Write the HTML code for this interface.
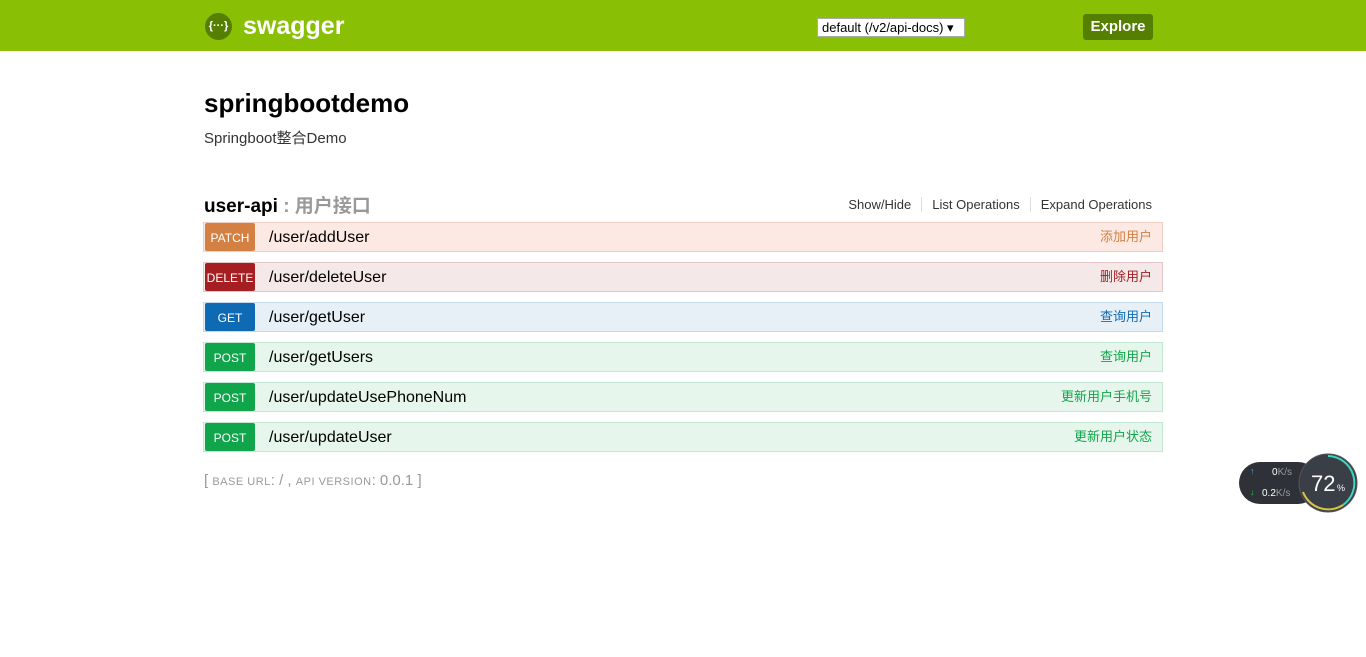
<!DOCTYPE html>
<html><head><meta charset="utf-8"><style>
body{margin:0;background:#fff;font-family:"Liberation Sans","Noto Sans CJK SC",sans-serif;width:1366px;height:657px;overflow:hidden;position:relative}
.hdr{position:absolute;left:0;top:0;width:1366px;height:51px;background:#89bf04}
.logo{position:absolute;left:205px;top:13px;width:27px;height:27px;border-radius:50%;background:#547f00;color:#fff;font-size:11px;line-height:27px;text-align:center;font-weight:bold}
.brand{position:absolute;left:243px;top:12px;color:#fff;font-size:25px;font-weight:bold}
.sel{position:absolute;left:817px;top:18px;width:148px;height:19px;background:#fff;border:1px solid #aaa;font-size:13px;line-height:18px;padding-left:4px;box-sizing:border-box;color:#000}
.exp{position:absolute;left:1083px;top:14px;width:70px;height:26px;background:#547f00;border-radius:3px;color:#fff;font-weight:bold;font-size:15px;line-height:26px;text-align:center}
h1{position:absolute;left:204px;top:88px;margin:0;font-size:26px;font-weight:bold;color:#000}
.desc{position:absolute;left:204px;top:127px;font-size:15px;color:#333}
.sec{position:absolute;left:204px;top:191px;font-size:19px;font-weight:bold;color:#000}
.sec span{color:#999}
.links{position:absolute;right:214px;top:197px;font-size:13px;color:#333}
.links span{padding:0 10px;border-right:1px solid #ddd}
.links span:last-child{border:none;padding-right:0}
.row{position:absolute;left:203px;width:958px;height:28px;border:1px solid}
.b{position:absolute;left:1px;top:0;width:50px;height:28px;color:#fff;font-size:12px;line-height:30px;text-align:center;border-radius:2px}
.p{position:absolute;left:65px;top:0;line-height:29px;font-size:16px;color:#000}
.r{position:absolute;right:10px;top:0;line-height:28px;font-size:13px}
.foot{position:absolute;left:204px;top:472px;font-size:15px;color:#999}
.sm{font-size:11px;letter-spacing:.5px}
</style></head><body>
<div class="hdr"><div class="logo">{···}</div><div class="brand">swagger</div>
<div class="sel">default (/v2/api-docs) ▾</div><div class="exp">Explore</div></div>
<h1>springbootdemo</h1>
<div class="desc">Springboot整合Demo</div>
<div class="sec">user-api <span>: 用户接口</span></div>
<div class="links"><span>Show/Hide</span><span>List Operations</span><span>Expand Operations</span></div>

<div class="row" style="top:222px;background:#fce9e3;border-color:#f0cdc2"><div class="b" style="background:#d38042">PATCH</div><div class="p">/user/addUser</div><div class="r" style="color:#d38042">添加用户</div></div>
<div class="row" style="top:262px;background:#f5e8e8;border-color:#e8c6c7"><div class="b" style="background:#a41e22">DELETE</div><div class="p">/user/deleteUser</div><div class="r" style="color:#a41e22">删除用户</div></div>
<div class="row" style="top:302px;background:#e7f0f7;border-color:#c3d9ec"><div class="b" style="background:#0f6ab4">GET</div><div class="p">/user/getUser</div><div class="r" style="color:#0f6ab4">查询用户</div></div>
<div class="row" style="top:342px;background:#e7f6ec;border-color:#c3e8d1"><div class="b" style="background:#10a54a">POST</div><div class="p">/user/getUsers</div><div class="r" style="color:#10a54a">查询用户</div></div>
<div class="row" style="top:382px;background:#e7f6ec;border-color:#c3e8d1"><div class="b" style="background:#10a54a">POST</div><div class="p">/user/updateUsePhoneNum</div><div class="r" style="color:#10a54a">更新用户手机号</div></div>
<div class="row" style="top:422px;background:#e7f6ec;border-color:#c3e8d1"><div class="b" style="background:#10a54a">POST</div><div class="p">/user/updateUser</div><div class="r" style="color:#10a54a">更新用户状态</div></div>

<div class="foot">[ <span class="sm">BASE URL</span>: / , <span class="sm">API VERSION</span>: 0.0.1 ]</div>

<div style="position:absolute;left:1239px;top:462px;width:80px;height:42px;border-radius:21px;background:#2e3138"></div>
<div style="position:absolute;left:1250px;top:466px;font-size:9px;color:#4aa3df">↑</div>
<div style="position:absolute;left:1250px;top:487px;font-size:9px;color:#3cb54a">↓</div>
<div style="position:absolute;left:1272px;top:467px;font-size:10px;color:#fff">0<span style="color:#999">K/s</span></div>
<div style="position:absolute;left:1262px;top:488px;font-size:10px;color:#fff">0.2<span style="color:#999">K/s</span></div>
<svg style="position:absolute;left:1297px;top:452px" width="62" height="62"><circle cx="31" cy="31" r="29" fill="#3a3e47" stroke="#555" stroke-width="1"/><path d="M31 4 A27 27 0 0 1 46 53" fill="none" stroke="#3dd6c0" stroke-width="2"/><path d="M46 53 A27 27 0 0 1 6 40" fill="none" stroke="#d8c640" stroke-width="2"/><text x="14" y="39" fill="#fff" font-size="22" font-family="Liberation Sans">72</text><text x="40" y="39" fill="#fff" font-size="9" font-family="Liberation Sans">%</text></svg>
</body></html>
